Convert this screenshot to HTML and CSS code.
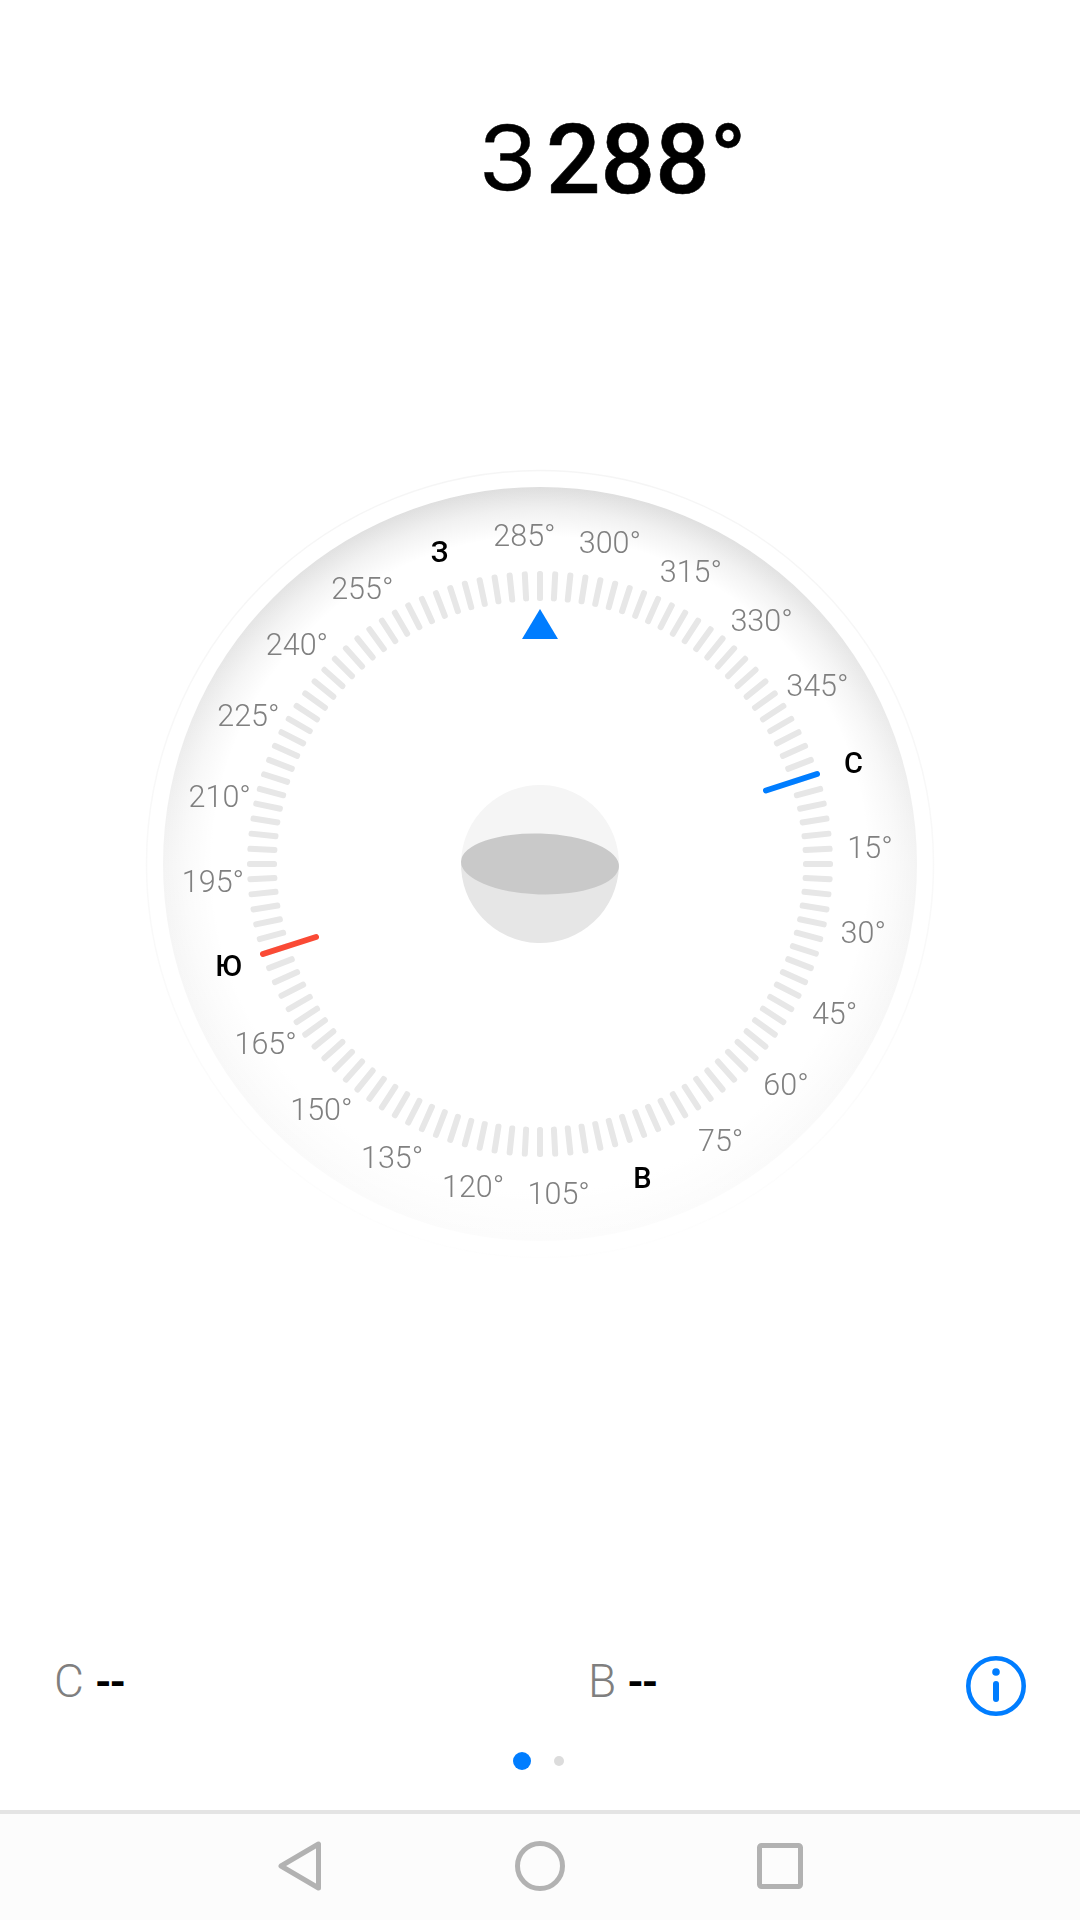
FILE: index.html
```html
<!DOCTYPE html>
<html lang="ru">
<head>
<meta charset="utf-8">
<title>Компас</title>
<link rel="stylesheet" href="styles.css">
</head>
<body>
<main class="page">
  <header class="heading">
    <span class="heading-dir">З</span><span class="heading-deg">288°</span>
  </header>

  <section class="dial-area">
    <svg class="dial" viewBox="-400 -400 800 800" width="800" height="800">
      <defs>
        <linearGradient id="ringShade" x1="0" y1="0" x2="0" y2="1">
          <stop offset="0" stop-color="#f5f5f5"/>
          <stop offset="0.6" stop-color="#f9f9f9"/>
          <stop offset="1" stop-color="#fefefe"/>
        </linearGradient>
        <linearGradient id="discShade" x1="0" y1="0" x2="0" y2="1">
          <stop offset="0" stop-color="#dedede"/>
          <stop offset="0.25" stop-color="#e8e8e8"/>
          <stop offset="0.5" stop-color="#f4f4f4"/>
          <stop offset="1" stop-color="#fcfcfc"/>
        </linearGradient>
        <radialGradient id="discGlow" cx="0.5" cy="0.5" r="0.5">
          <stop offset="0.87" stop-color="#fff" stop-opacity="1"/>
          <stop offset="0.94" stop-color="#fff" stop-opacity="0.55"/>
          <stop offset="1" stop-color="#fff" stop-opacity="0"/>
        </radialGradient>
        <rect id="tick" class="tick" x="-3" y="-293" width="6" height="30" rx="2.5"/>
        <g id="tick5">
          <use href="#tick"/>
          <use href="#tick" transform="rotate(3)"/>
          <use href="#tick" transform="rotate(6)"/>
          <use href="#tick" transform="rotate(9)"/>
          <use href="#tick" transform="rotate(12)"/>
        </g>
        <g id="tick30">
          <use href="#tick5"/>
          <use href="#tick5" transform="rotate(15)"/>
        </g>
        <g id="tick120">
          <use href="#tick30"/>
          <use href="#tick30" transform="rotate(30)"/>
          <use href="#tick30" transform="rotate(60)"/>
          <use href="#tick30" transform="rotate(90)"/>
        </g>
      </defs>

      <circle class="outer-ring" r="393.5" stroke="url(#ringShade)"/>
      <circle r="377" fill="url(#discShade)"/>
      <circle r="377" fill="url(#discGlow)"/>

      <use href="#tick120"/>
      <use href="#tick120" transform="rotate(120)"/>
      <use href="#tick120" transform="rotate(240)"/>

      <line class="needle needle-north" x1="226" y1="-73.500" x2="277" y2="-90"/>
      <line class="needle needle-south" x1="-224" y1="73" x2="-277" y2="90"/>
      <path class="pointer" d="M0 -255 L18 -225 L-18 -225 Z"/>

      <g class="sphere" transform="rotate(1.8)">
        <path class="sphere-top" d="M-79 0 A79 79 0 0 1 79 0 Z"/>
        <path class="sphere-bottom" d="M-79 0 A79 79 0 0 0 79 0 Z"/>
        <ellipse class="sphere-plane" rx="79" ry="30.5"/>
      </g>

      <g class="labels" transform="translate(0.5 0.5)">
        <text x="-16" y="-329">285°</text>
        <text x="69.400" y="-321.800">300°</text>
        <text x="150.400" y="-293.100">315°</text>
        <text x="221.100" y="-244.500">330°</text>
        <text x="276.900" y="-179.200">345°</text>
        <text x="329.500" y="-17.200">15°</text>
        <text x="322.800" y="68.400">30°</text>
        <text x="294.100" y="149.400">45°</text>
        <text x="245.500" y="220.100">60°</text>
        <text x="180.200" y="275.900">75°</text>
        <text x="18.200" y="328.500">105°</text>
        <text x="-67.400" y="321.800">120°</text>
        <text x="-148.400" y="293.100">135°</text>
        <text x="-219.100" y="244.500">150°</text>
        <text x="-274.900" y="179.200">165°</text>
        <text x="-327.500" y="17.200">195°</text>
        <text x="-320.800" y="-68.400">210°</text>
        <text x="-292.100" y="-149.400">225°</text>
        <text x="-243.500" y="-220.100">240°</text>
        <text x="-178.200" y="-275.900">255°</text>
      </g>
      <g class="cardinals">
        <text x="313.500" y="-100.700">С</text>
        <text x="102.500" y="313.900">В</text>
        <text x="-311.500" y="101.700">Ю</text>
        <text x="-100.500" y="-311.900">З</text>
      </g>
    </svg>
  </section>

  <section class="readouts">
    <div class="readout readout-lat"><span class="axis">С</span><span class="value">--</span></div>
    <div class="readout readout-lon"><span class="axis">В</span><span class="value">--</span></div>
    <svg class="info" viewBox="0 0 60 60" width="60" height="60">
      <circle class="info-ring" cx="30" cy="30" r="27.700"/>
      <circle class="info-dot" cx="30" cy="16" r="3.800"/>
      <line class="info-stem" x1="30" y1="28" x2="30" y2="43"/>
    </svg>
  </section>

  <div class="pager">
    <span class="dot dot-active"></span>
    <span class="dot"></span>
  </div>

  <nav class="navbar">
    <svg class="nav-icon" viewBox="0 0 45 50" width="45" height="50">
      <path d="M40.500 3 V47 L3 25 Z"/>
    </svg>
    <svg class="nav-icon" viewBox="0 0 50 50" width="50" height="50">
      <circle cx="25" cy="25" r="22.500"/>
    </svg>
    <svg class="nav-icon" viewBox="0 0 46 46" width="46" height="46">
      <rect x="2.500" y="2.500" width="41" height="41" rx="2"/>
    </svg>
  </nav>
</main>
</body>
</html>
```
FILE: styles.css
```css
* { box-sizing: border-box; }

html, body {
  margin: 0;
  padding: 0;
  background: #fff;
}

.page {
  width: 1080px;
  height: 1920px;
  display: flex;
  flex-direction: column;
  font-family: Roboto, "Noto Sans", sans-serif;
  overflow: hidden;
}

.heading {
  height: 464px;
  padding: 104px 0 0 147.5px;
  display: flex;
  justify-content: center;
  align-items: flex-start;
  font-size: 96px;
  line-height: 112px;
  color: #000;
}

.heading-dir { font-size: 90px; font-weight: 400; margin-right: 11.5px; -webkit-text-stroke: 0.4px #000; }
.heading-deg { font-weight: 500; -webkit-text-stroke: 0.5px #000; }

.dial-area {
  height: 800px;
  display: flex;
  justify-content: center;
}

.dial { display: block; will-change: transform; }

.outer-ring {
  fill: #fff;
  stroke-width: 1.5;
}

.tick { fill: #e7e7e7; }

.needle {
  stroke-width: 6;
  stroke-linecap: round;
}
.needle-north { stroke: #007dff; }
.needle-south { stroke: #fa4a35; }

.pointer { fill: #007dff; }

.sphere-top { fill: #f5f5f5; }
.sphere-bottom { fill: #e6e6e6; }
.sphere-plane { fill: #c9c9c9; }

.labels text {
  font-size: 30.5px;
  font-weight: 300;
  fill: #808080;
  text-anchor: middle;
  dominant-baseline: central;
}

.cardinals text {
  font-size: 29px;
  font-weight: 500;
  fill: #000;
  text-anchor: middle;
  dominant-baseline: central;
}

.readouts {
  margin-top: 392px;
  height: 60px;
  padding: 0 0 0 54px;
  display: flex;
  align-items: flex-start;
}

.readout {
  display: flex;
  align-items: baseline;
  gap: 11px;
  font-size: 46px;
  line-height: 50px;
}
.readout-lat { width: 534px; }
.readout-lon { width: 378px; }

.axis { font-weight: 300; color: #7f7f7f; }
.value { font-size: 42px; font-weight: 700; letter-spacing: -2px; color: #000; }

.info { flex: none; }
.info-ring { fill: none; stroke: #007dff; stroke-width: 4.6; }
.info-dot { fill: #007dff; }
.info-stem { stroke: #007dff; stroke-width: 6; stroke-linecap: round; }

.pager {
  margin-top: 36px;
  height: 18px;
  padding-right: 3.5px;
  display: flex;
  justify-content: center;
  align-items: center;
  gap: 22.5px;
}

.dot {
  width: 10px;
  height: 10px;
  border-radius: 50%;
  background: #dcdcdc;
}
.dot-active {
  width: 18px;
  height: 18px;
  background: #007dff;
}

.navbar {
  margin-top: auto;
  height: 110px;
  padding: 0 0 2px 1px;
  border-top: 4px solid #e4e4e4;
  background: #fcfcfc;
  display: flex;
  align-items: center;
  justify-content: center;
  gap: 192px;
}

.nav-icon {
  display: block;
  fill: none;
  stroke: #b2b2b2;
  stroke-width: 5;
  stroke-linejoin: round;
}
```
